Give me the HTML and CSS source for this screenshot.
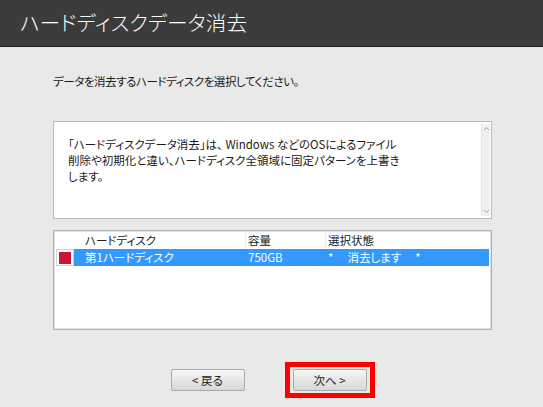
FILE: index.html
```html
<!DOCTYPE html>
<html lang="ja">
<head>
<meta charset="utf-8">
<title>ハードディスクデータ消去</title>
<link rel="stylesheet" href="styles.css">
</head>
<body>
<header class="titlebar">
  <h1 class="title">ハードディスクデータ消去</h1>
</header>
<main class="content">
  <p class="lead">データを消去するハードディスクを選択してください。</p>
  <div class="infobox">
    <p class="infotext">「ハードディスクデータ消去」は、 Windows などのOSによるファイル<br>削除や初期化と違い、ハードディスク全領域に固定パターンを上書き<br>します。</p>
    <div class="scrollbar">
      <svg class="arrow" width="7" height="5" viewBox="0 0 7 5"><path d="M1 4 L3.5 1.5 L6 4" fill="none" stroke="#a0a0a0" stroke-width="1"/></svg>
      <svg class="arrow" width="7" height="5" viewBox="0 0 7 5"><path d="M1 1 L3.5 3.5 L6 1" fill="none" stroke="#a0a0a0" stroke-width="1"/></svg>
    </div>
  </div>
  <div class="listbox">
    <div class="row head">
      <div class="cell icon"></div>
      <div class="cell c1">ハードディスク</div>
      <div class="cell c2">容量</div>
      <div class="cell c3">選択状態</div>
    </div>
    <div class="row selected">
      <div class="cell icon"><span class="chip"></span></div>
      <div class="cell c1">第1ハードディスク</div>
      <div class="cell c2">750GB</div>
      <div class="cell c3">*　 消去します　 *</div>
    </div>
  </div>
  <div class="buttons">
    <button class="btn">&lt; 戻る</button>
    <span class="highlight"><button class="btn">次へ &gt;</button></span>
  </div>
</main>
</body>
</html>
```

FILE: styles.css
```css
html, body {
  margin: 0;
  padding: 0;
}
body {
  width: 543px;
  height: 407px;
  overflow: hidden;
  background: #e9e9e9;
  font-family: "Noto Sans CJK JP", "Liberation Sans", sans-serif;
  font-feature-settings: "palt";
  color: #1a1a1a;
}
.titlebar {
  height: 46px;
  background: #3b3b3b;
  border-bottom: 1px solid #1e1e1e;
  display: flex;
  align-items: center;
  padding-left: 20px;
}
.title {
  margin: 0;
  font-size: 20.5px;
  font-weight: 300;
  color: #ffffff;
  letter-spacing: 0.2px;
  line-height: 1;
  padding-bottom: 2px;
}
.content {
  padding-left: 53px;
  width: 439px;
}
.lead {
  margin: 26px 0 0 0;
  font-size: 11.5px;
  line-height: 16px;
  letter-spacing: -0.45px;
}
.infobox {
  margin-top: 32px;
  height: 96px;
  background: #ffffff;
  border: 1px solid #b9b9b9;
  display: flex;
  justify-content: space-between;
}
.infotext {
  margin: 14px 0 0 14px;
  font-size: 11.5px;
  line-height: 16px;
}
.scrollbar {
  width: 8px;
  margin: 2px 1px 2px 0;
  background: #f0f0f0;
  border-left: 1px solid #e4e4e4;
  display: flex;
  flex-direction: column;
  justify-content: space-between;
  align-items: center;
  padding: 2px 0;
}
.arrow {
  display: block;
}
.listbox {
  margin-top: 11px;
  height: 97px;
  background: #ffffff;
  border: 1px solid #b0b0b0;
  box-shadow: inset 0 0 0 1px #e2e2e2;
  padding: 1px 2px 0 2px;
}
.row {
  display: flex;
  height: 17px;
  font-size: 11.5px;
  line-height: 17px;
}
.cell {
  white-space: nowrap;
}
.icon {
  width: 18px;
  display: flex;
  align-items: center;
  justify-content: center;
}
.c1 {
  width: 160px;
  padding-left: 11px;
}
.c2 {
  width: 77px;
  padding-left: 2px;
}
.c3 {
  flex: 1;
  padding-left: 2px;
}
.head .c1, .head .c2 {
  border-right: 1px solid #ececec;
}
.head {
  color: #222222;
}
.selected .c1, .selected .c2, .selected .c3 {
  background: #3399ff;
  color: #ffffff;
}
.selected .c1, .selected .c2 {
  border-right: 1px solid #3399ff;
}
.selected .icon {
  background: #ffffff;
  border: 1px solid #d0d0d0;
  box-sizing: border-box;
}
.chip {
  width: 12px;
  height: 12px;
  background: #cc1438;
}
.buttons {
  margin-top: 32px;
  display: flex;
  justify-content: center;
  align-items: center;
  gap: 40px;
  width: 439px;
}
.btn {
  width: 74px;
  height: 22px;
  font-family: "Noto Sans CJK JP", "Liberation Sans", sans-serif;
  font-feature-settings: "palt";
  font-size: 11.5px;
  color: #222222;
  background: linear-gradient(#f6f6f6, #e6e6e6 50%, #d8d8d8);
  border: 1px solid #a9a9a9;
  border-radius: 2px;
  padding: 0;
  line-height: 20px;
}
.highlight {
  display: block;
  border: 5px solid #ff0000;
  padding: 2px 3px;
  line-height: 0;
}
```
